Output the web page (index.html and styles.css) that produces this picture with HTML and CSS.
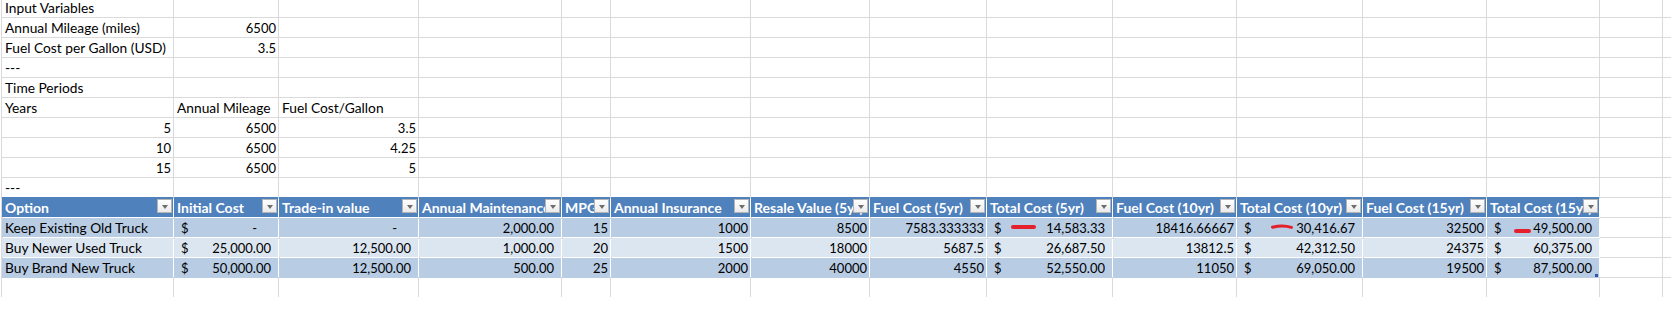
FILE: index.html
```html
<!DOCTYPE html>
<html lang="en">
<head>
    <meta charset="UTF-8">
    <meta name="viewport" content="width=device-width, initial-scale=1.0">
    <title>Truck Options - Cost Comparison</title>
    <link rel="stylesheet" href="styles.css">
</head>
<body>
    <div class="sheet">
        <!-- Input variables -->
        <div class="c">Input Variables</div><div class="c"></div><div class="c"></div><div class="c"></div><div class="c"></div><div class="c"></div><div class="c"></div><div class="c"></div><div class="c"></div><div class="c"></div><div class="c"></div><div class="c"></div><div class="c"></div><div class="c"></div><div class="c"></div>
        <div class="c">Annual Mileage (miles)</div><div class="c r">6500</div><div class="c"></div><div class="c"></div><div class="c"></div><div class="c"></div><div class="c"></div><div class="c"></div><div class="c"></div><div class="c"></div><div class="c"></div><div class="c"></div><div class="c"></div><div class="c"></div><div class="c"></div>
        <div class="c">Fuel Cost per Gallon (USD)</div><div class="c r">3.5</div><div class="c"></div><div class="c"></div><div class="c"></div><div class="c"></div><div class="c"></div><div class="c"></div><div class="c"></div><div class="c"></div><div class="c"></div><div class="c"></div><div class="c"></div><div class="c"></div><div class="c"></div>
        <div class="c">---</div><div class="c"></div><div class="c"></div><div class="c"></div><div class="c"></div><div class="c"></div><div class="c"></div><div class="c"></div><div class="c"></div><div class="c"></div><div class="c"></div><div class="c"></div><div class="c"></div><div class="c"></div><div class="c"></div>

        <!-- Time periods -->
        <div class="c">Time Periods</div><div class="c"></div><div class="c"></div><div class="c"></div><div class="c"></div><div class="c"></div><div class="c"></div><div class="c"></div><div class="c"></div><div class="c"></div><div class="c"></div><div class="c"></div><div class="c"></div><div class="c"></div><div class="c"></div>
        <div class="c">Years</div><div class="c">Annual Mileage</div><div class="c">Fuel Cost/Gallon</div><div class="c"></div><div class="c"></div><div class="c"></div><div class="c"></div><div class="c"></div><div class="c"></div><div class="c"></div><div class="c"></div><div class="c"></div><div class="c"></div><div class="c"></div><div class="c"></div>
        <div class="c r">5</div><div class="c r">6500</div><div class="c r">3.5</div><div class="c"></div><div class="c"></div><div class="c"></div><div class="c"></div><div class="c"></div><div class="c"></div><div class="c"></div><div class="c"></div><div class="c"></div><div class="c"></div><div class="c"></div><div class="c"></div>
        <div class="c r">10</div><div class="c r">6500</div><div class="c r">4.25</div><div class="c"></div><div class="c"></div><div class="c"></div><div class="c"></div><div class="c"></div><div class="c"></div><div class="c"></div><div class="c"></div><div class="c"></div><div class="c"></div><div class="c"></div><div class="c"></div>
        <div class="c r">15</div><div class="c r">6500</div><div class="c r">5</div><div class="c"></div><div class="c"></div><div class="c"></div><div class="c"></div><div class="c"></div><div class="c"></div><div class="c"></div><div class="c"></div><div class="c"></div><div class="c"></div><div class="c"></div><div class="c"></div>
        <div class="c">---</div><div class="c"></div><div class="c"></div><div class="c"></div><div class="c"></div><div class="c"></div><div class="c"></div><div class="c"></div><div class="c"></div><div class="c"></div><div class="c"></div><div class="c"></div><div class="c"></div><div class="c"></div><div class="c"></div>

        <!-- Options table -->
        <div class="c th">Option<span class="fb"></span></div>
        <div class="c th">Initial Cost<span class="fb"></span></div>
        <div class="c th">Trade-in value<span class="fb"></span></div>
        <div class="c th">Annual Maintenance<span class="fb"></span></div>
        <div class="c th">MPG<span class="fb"></span></div>
        <div class="c th">Annual Insurance<span class="fb"></span></div>
        <div class="c th">Resale Value (5yr)<span class="fb"></span></div>
        <div class="c th">Fuel Cost (5yr)<span class="fb"></span></div>
        <div class="c th">Total Cost (5yr)<span class="fb"></span></div>
        <div class="c th">Fuel Cost (10yr)<span class="fb"></span></div>
        <div class="c th">Total Cost (10yr)<span class="fb"></span></div>
        <div class="c th">Fuel Cost (15yr)<span class="fb"></span></div>
        <div class="c th">Total Cost (15yr)<span class="fb"></span></div>
        <div class="c"></div><div class="c"></div>

        <div class="c b1">Keep Existing Old Truck</div>
        <div class="c b1 acct"><span class="cur">$</span><span class="zero">-</span></div>
        <div class="c b1 r"><span class="zero">-</span></div>
        <div class="c b1 r"><span class="amt">2,000.00</span></div>
        <div class="c b1 r">15</div>
        <div class="c b1 r">1000</div>
        <div class="c b1 r">8500</div>
        <div class="c b1 r">7583.333333</div>
        <div class="c b1 acct"><span class="cur">$</span><span class="amt">14,583.33</span><span class="mark m1"></span></div>
        <div class="c b1 r">18416.66667</div>
        <div class="c b1 acct"><span class="cur">$</span><span class="amt">30,416.67</span>
            <svg class="mark m2" width="24" height="7" viewBox="0 0 24 7"><path d="M1.5 3.2 C7 1.8 15 1.6 20.5 3.4" fill="none" stroke="#e3202b" stroke-width="3" stroke-linecap="round"/></svg>
        </div>
        <div class="c b1 r">32500</div>
        <div class="c b1 acct"><span class="cur">$</span><span class="amt">49,500.00</span><span class="mark m3"></span></div>
        <div class="c"></div><div class="c"></div>

        <div class="c b2">Buy Newer Used Truck</div>
        <div class="c b2 acct"><span class="cur">$</span><span class="amt">25,000.00</span></div>
        <div class="c b2 r"><span class="amt">12,500.00</span></div>
        <div class="c b2 r"><span class="amt">1,000.00</span></div>
        <div class="c b2 r">20</div>
        <div class="c b2 r">1500</div>
        <div class="c b2 r">18000</div>
        <div class="c b2 r">5687.5</div>
        <div class="c b2 acct"><span class="cur">$</span><span class="amt">26,687.50</span></div>
        <div class="c b2 r">13812.5</div>
        <div class="c b2 acct"><span class="cur">$</span><span class="amt">42,312.50</span></div>
        <div class="c b2 r">24375</div>
        <div class="c b2 acct"><span class="cur">$</span><span class="amt">60,375.00</span></div>
        <div class="c"></div><div class="c"></div>

        <div class="c b1 last">Buy Brand New Truck</div>
        <div class="c b1 last acct"><span class="cur">$</span><span class="amt">50,000.00</span></div>
        <div class="c b1 last r"><span class="amt">12,500.00</span></div>
        <div class="c b1 last r"><span class="amt">500.00</span></div>
        <div class="c b1 last r">25</div>
        <div class="c b1 last r">2000</div>
        <div class="c b1 last r">40000</div>
        <div class="c b1 last r">4550</div>
        <div class="c b1 last acct"><span class="cur">$</span><span class="amt">52,550.00</span></div>
        <div class="c b1 last r">11050</div>
        <div class="c b1 last acct"><span class="cur">$</span><span class="amt">69,050.00</span></div>
        <div class="c b1 last r">19500</div>
        <div class="c b1 last acct"><span class="cur">$</span><span class="amt">87,500.00</span><span class="handle"></span></div>
        <div class="c"></div><div class="c"></div>

        <div class="c"></div><div class="c"></div><div class="c"></div><div class="c"></div><div class="c"></div><div class="c"></div><div class="c"></div><div class="c"></div><div class="c"></div><div class="c"></div><div class="c"></div><div class="c"></div><div class="c"></div><div class="c"></div><div class="c"></div>
    </div>
</body>
</html>
```
FILE: styles.css
```css
/* General Styles */
body {
    margin: 0;
    background-color: #fff;
    font-family: Lato, "Liberation Sans", sans-serif;
    font-size: 13.75px;
    color: #000;
    overflow: hidden;
}

/* Sheet grid: gaps show through as gridlines */
.sheet {
    display: grid;
    grid-template-columns: 171px 104px 139px 142px 48px 139px 118px 116px 125px 123px 125px 123px 112px 62px 1fr;
    grid-template-rows: 17px;
    grid-auto-rows: 19px;
    gap: 1px;
    margin-left: 1px;
    padding-left: 1px;
    background-color: #dadada;
}

.c {
    position: relative;
    display: flex;
    align-items: flex-end;
    min-width: 0;
    padding: 0 2px 1px 3px;
    line-height: 16px;
    white-space: nowrap;
    overflow: hidden;
    background-color: #fff;
}

.r,
.acct {
    font-size: 13px;
}

.r {
    justify-content: flex-end;
}

/* Table section */
.th {
    background-color: #4f81bd;
    color: #fff;
    font-size: 14px;
    font-weight: 700;
    box-shadow: 1px 1px 0 #fff, 0 -1px 0 #4f81bd;
}

.b1 {
    background-color: #b8cce4;
    box-shadow: 1px 1px 0 #fff;
}

.b2 {
    background-color: #dce6f1;
    box-shadow: 1px 1px 0 #fff;
}

.b1.last {
    box-shadow: 1px 0 0 #fff, 0 1px 0 #b8cce4;
}

.acct {
    justify-content: space-between;
}

.cur {
    padding-left: 4px;
}

.amt {
    padding-right: 5px;
}

.zero {
    padding-right: 19px;
}

/* Filter buttons */
.fb {
    position: absolute;
    top: 1px;
    right: 1px;
    width: 15px;
    height: 14px;
    box-sizing: border-box;
    border: 1px solid #b4b4b4;
    background: linear-gradient(#ffffff, #ebebeb);
    display: flex;
    align-items: center;
    justify-content: center;
}

.fb::after {
    content: "";
    width: 0;
    height: 0;
    border-left: 3.5px solid transparent;
    border-right: 3.5px solid transparent;
    border-top: 4px solid #6e6e6e;
    margin-top: 1px;
}

/* Red pen marks */
.mark {
    position: absolute;
}

.m1 {
    left: 24px;
    top: 7px;
    width: 25px;
    height: 4px;
    border-radius: 2px;
    background-color: #e3202b;
}

.m2 {
    left: 34px;
    top: 6px;
}

.m3 {
    left: 27px;
    top: 11px;
    width: 17px;
    height: 4px;
    border-radius: 2px;
    background-color: #e3202b;
}

.handle {
    position: absolute;
    right: 1px;
    bottom: 0;
    width: 3px;
    height: 3px;
    background-color: #2f56a8;
}
```
